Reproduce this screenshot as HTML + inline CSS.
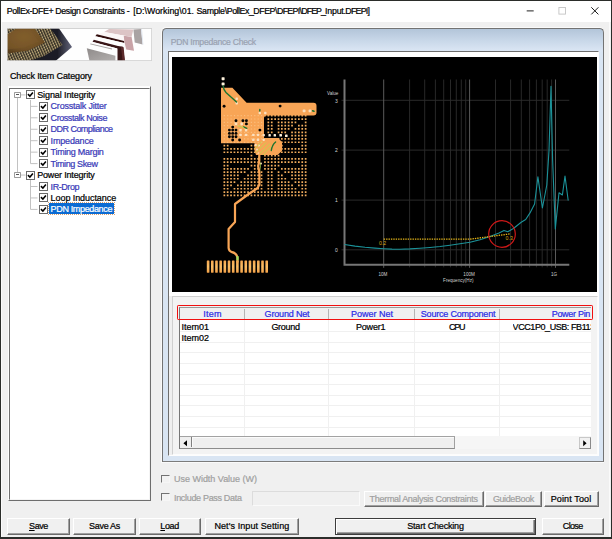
<!DOCTYPE html>
<html><head><meta charset="utf-8"><title>PollEx-DFE+ Design Constraints</title>
<style>
html,body{margin:0;padding:0}
body{width:612px;height:539px;position:relative;overflow:hidden;background:#2b2d2a;font-family:"Liberation Sans",sans-serif}
div,span,svg{position:absolute;box-sizing:border-box}
.t{-webkit-text-stroke:0.22px currentColor;white-space:pre;line-height:12px;height:12px}
.t u{text-decoration:underline;text-underline-offset:1px}
#win{left:1px;top:1px;width:609.5px;height:536px;background:#f0f0f0}
#title{left:0;top:0;width:609.5px;height:21px;background:#fff}
.btn{background:#f0f0f0;border:1px solid;border-color:#fff #6a6a6a #6a6a6a #fff;box-shadow:inset -1px -1px 0 #a0a0a0}
.btn.def{border:1px solid #3c3c3c;box-shadow:inset 1px 1px 0 #fff,inset -1px -1px 0 #6a6a6a,inset -2px -2px 0 #a0a0a0}
.sunk{border:1px solid;border-color:#a0a0a0 #fff #fff #a0a0a0;box-shadow:inset 1px 1px 0 #696969,inset -1px -1px 0 #e3e3e3;background:#fff}
.cb{width:9px;height:9px;background:#fff;border:1.2px solid #6c6c6c}
.cbd{width:8.4px;height:8px;background:#f2f2f2;border:1.3px solid;border-color:#727272 #f6f6f6 #f6f6f6 #727272}
.pm{width:6.6px;height:6.4px;border:1px solid #9c9c9c;border-radius:0.8px;background:#fff}
.pm i{position:absolute;left:0.7px;top:1.7px;width:3.2px;height:1px;background:#555}
.gl{background:#f0f0f0}

</style></head>
<body>
<div id="win">
 <div id="title"></div>
 <div style="left:608.3px;top:21px;width:1.2px;height:515px;background:#fafafa"></div>
 <div style="left:0;top:21px;width:1px;height:515px;background:#fbfbfb"></div>
</div>
<!-- title bar buttons -->
<svg style="left:520px;top:2px" width="90" height="18" viewBox="520 2 90 18">
 <path d="M526.7 10.9H533.7" stroke="#222" stroke-width="1" fill="none"/>
 <rect x="558.9" y="7.5" width="6.6" height="6.6" stroke="#c4c4c4" stroke-width="0.9" fill="none"/>
 <path d="M591.3 7.3L598.4 14.4M598.4 7.3L591.3 14.4" stroke="#1a1a1a" stroke-width="1" fill="none"/>
</svg>

<!-- photo banner -->
<svg style="left:7px;top:28px" width="145" height="33" viewBox="7 28 145 33">
 <defs>
  <radialGradient id="chipg" cx="0.45" cy="0.35" r="0.8">
   <stop offset="0" stop-color="#86622f"/><stop offset="0.6" stop-color="#705026"/><stop offset="1" stop-color="#4c3517"/>
  </radialGradient>
  <pattern id="pins" width="2.5" height="2.5" patternUnits="userSpaceOnUse" patternTransform="rotate(-24)">
   <rect width="2.5" height="2.5" fill="#2f2920"/><rect x="0.4" y="0.3" width="1.3" height="1.9" rx="0.5" fill="#d2bd88"/>
  </pattern>
  <linearGradient id="shad" x1="0" y1="0" x2="1" y2="0"><stop offset="0" stop-color="#15151c"/><stop offset="0.78" stop-color="#1e1e28"/><stop offset="1" stop-color="#62647a"/></linearGradient>
  <linearGradient id="gsh" x1="0" y1="0" x2="1" y2="1"><stop offset="0" stop-color="#8f8b8a"/><stop offset="1" stop-color="#b3afae"/></linearGradient>
  <filter id="bl" x="-5%" y="-5%" width="110%" height="110%"><feGaussianBlur stdDeviation="0.35"/></filter>
  <clipPath id="bclip"><rect x="7.6" y="28.8" width="143.6" height="31.5"/></clipPath>
 </defs>
 <rect x="7" y="28" width="144.8" height="33" fill="#c9c9c9"/>
 <rect x="7.6" y="28.8" width="143.6" height="31.5" fill="#fefefe"/>
 <g clip-path="url(#bclip)" filter="url(#bl)">
 <!-- dark body -->
 <polygon points="7,28 58.7,28 72,47 55.5,61 7,61" fill="url(#shad)"/>
 <!-- pins band -->
 <polygon points="7,28 50,28 62.5,45 44,56 29,61 7,61" fill="url(#pins)"/>
 <!-- chip face -->
 <polygon points="7,28 34,28 45,42.6 27.6,50.7 7,53.5" fill="url(#chipg)"/>
 <polygon points="7,31 30,29.5 39,41.5 25,47.5 7,49.5" fill="#7c5a2a" opacity="0.5"/>
 <polygon points="7,28 17,28 7,35" fill="url(#pins)"/>
 <!-- layers (back to front) -->
 <polygon points="133.4,29.4 141,29 142.6,44.6 134.7,42.6" fill="#a9a3a3"/>
 <polygon points="141,29 142,29 143.4,44.8 142.6,44.6" fill="#dfe6f0"/>
 <polygon points="109,29 133.4,29.4 131.5,37 104.2,32" fill="#dcc4c5"/>
 <polygon points="104.2,32 131.5,37 134,50.8 124.5,49.3 124,41.4 96.8,34.6" fill="#fbf6f6"/>
 <polygon points="123.8,35.8 131.6,37 134,50.8 126.3,49.6 124.3,41.5" fill="#c9a3a7"/>
 <polygon points="96.8,34.3 124,41.1 124.2,43.1 95.3,36.3" fill="#32100f"/>
 <polygon points="95.5,36.2 124.1,43 124.5,48 93.5,40" fill="#fdfdfd"/>
 <polygon points="93.8,39.7 118,46 123,46.8 124.7,61 117.3,61 117.3,48.5 92.5,42" fill="#391316"/>
 <polygon points="121,46.8 123.6,47.2 125,61 122.5,61" fill="#5a2a2c"/>
 <polygon points="92.5,41.8 117.3,48.4 117.3,61 113,61 113,55 88,47.5" fill="#fdfdfd"/>
 <polygon points="90.5,43.5 112,48.6 112,49.4 90,44.3" fill="#a5a1a0"/>
 <polygon points="86.8,48.2 115.4,55.7 115.4,61 89.5,61" fill="url(#gsh)"/>
 </g>
</svg>

<!-- tree panel -->
<div style="left:7.5px;top:86.2px;width:143.3px;height:415px;background:#fff;border:1px solid;border-color:#fdfdfd #6e6e6e #6e6e6e #fdfdfd"></div>
<div style="left:9px;top:87.9px;width:140.8px;height:412.3px;border:1.3px solid;border-color:#707070 #f4f4f4 #f4f4f4 #707070"></div>
<svg style="left:10px;top:89px" width="60" height="130" viewBox="10 89 60 130">
 <g stroke="#c2c2c2" stroke-width="1" fill="none">
  <path d="M17.5 98V175"/>
  <path d="M21 94.9H25.5M21 175.05H25.5"/>
  <path d="M30.5 100V163.6M30.5 180V209.4"/>
  <path d="M30.5 106.35H37.5M30.5 117.8H37.5M30.5 129.25H37.5M30.5 140.7H37.5M30.5 152.15H37.5M30.5 163.6H37.5M30.5 186.5H37.5M30.5 197.95H37.5M30.5 209.4H37.5"/>
 </g>
</svg>
<div class="pm" style="left:14.1px;top:91.50px"><i></i></div>
<div class="cb" style="left:25.8px;top:90.40px"><svg style="left:0;top:0" width="7" height="7" viewBox="0 0 7 7"><path d="M0.9 3.1L2.9 5.1L5.9 1.5" stroke="#000" stroke-width="1.5" fill="none"/></svg></div>
<div class="cb" style="left:39.1px;top:101.85px"><svg style="left:0;top:0" width="7" height="7" viewBox="0 0 7 7"><path d="M0.9 3.1L2.9 5.1L5.9 1.5" stroke="#000" stroke-width="1.5" fill="none"/></svg></div>
<div class="cb" style="left:39.1px;top:113.30px"><svg style="left:0;top:0" width="7" height="7" viewBox="0 0 7 7"><path d="M0.9 3.1L2.9 5.1L5.9 1.5" stroke="#000" stroke-width="1.5" fill="none"/></svg></div>
<div class="cb" style="left:39.1px;top:124.75px"><svg style="left:0;top:0" width="7" height="7" viewBox="0 0 7 7"><path d="M0.9 3.1L2.9 5.1L5.9 1.5" stroke="#000" stroke-width="1.5" fill="none"/></svg></div>
<div class="cb" style="left:39.1px;top:136.20px"><svg style="left:0;top:0" width="7" height="7" viewBox="0 0 7 7"><path d="M0.9 3.1L2.9 5.1L5.9 1.5" stroke="#000" stroke-width="1.5" fill="none"/></svg></div>
<div class="cb" style="left:39.1px;top:147.65px"><svg style="left:0;top:0" width="7" height="7" viewBox="0 0 7 7"><path d="M0.9 3.1L2.9 5.1L5.9 1.5" stroke="#000" stroke-width="1.5" fill="none"/></svg></div>
<div class="cb" style="left:39.1px;top:159.10px"><svg style="left:0;top:0" width="7" height="7" viewBox="0 0 7 7"><path d="M0.9 3.1L2.9 5.1L5.9 1.5" stroke="#000" stroke-width="1.5" fill="none"/></svg></div>
<div class="pm" style="left:14.1px;top:171.65px"><i></i></div>
<div class="cb" style="left:25.8px;top:170.55px"><svg style="left:0;top:0" width="7" height="7" viewBox="0 0 7 7"><path d="M0.9 3.1L2.9 5.1L5.9 1.5" stroke="#000" stroke-width="1.5" fill="none"/></svg></div>
<div class="cb" style="left:39.1px;top:182.00px"><svg style="left:0;top:0" width="7" height="7" viewBox="0 0 7 7"><path d="M0.9 3.1L2.9 5.1L5.9 1.5" stroke="#000" stroke-width="1.5" fill="none"/></svg></div>
<div class="cb" style="left:39.1px;top:193.45px"><svg style="left:0;top:0" width="7" height="7" viewBox="0 0 7 7"><path d="M0.9 3.1L2.9 5.1L5.9 1.5" stroke="#000" stroke-width="1.5" fill="none"/></svg></div>
<div class="cb" style="left:39.1px;top:204.90px"><svg style="left:0;top:0" width="7" height="7" viewBox="0 0 7 7"><path d="M0.9 3.1L2.9 5.1L5.9 1.5" stroke="#000" stroke-width="1.5" fill="none"/></svg></div>
<div style="left:48.9px;top:203.00px;width:64.8px;height:10.8px;background:#0b6bd3;outline:0.5px dotted #d8a070;outline-offset:-0.5px"></div>

<!-- PDN panel -->
<div style="left:161px;top:27px;width:443px;height:435.5px;border-radius:5px 5px 0 0;background:#fafafa"></div>
<div style="left:162px;top:28px;width:441.5px;height:434px;border-radius:4.5px 4.5px 0 0;background:linear-gradient(#b3c5d9 0,#c9d8e9 12px,#dbe6f4 22px,#d9e5f3 23px);border:1px solid #737373;border-bottom-color:#7c7c7c"></div>
<!-- inner frame -->
<div style="left:168px;top:51px;width:430.5px;height:405.2px;background:#f0f0f0;border:1px solid;border-color:#6e6e6e #fdfdfd #fdfdfd #6e6e6e"></div>
<div style="left:169px;top:52px;width:428.5px;height:244px;background:#fff"></div>
<div id="black" style="left:172px;top:56.5px;width:425px;height:235px;background:#000"></div>

<!-- table container -->
<div style="left:172px;top:295.5px;width:425.5px;height:159.8px;background:#f3f3f3;border:1px solid;border-color:#d0d0d0 #fcfcfc #fcfcfc #d0d0d0"></div>
<!-- grid -->
<div id="grid" style="left:179.2px;top:307px;width:411.5px;height:141.6px;background:#fff;border-left:1px solid #777;border-top:1px solid #9a9a9a;overflow:hidden">
 <!-- header -->
 <div style="left:0;top:0;width:412px;height:12px;background:#f0f0f0;border-bottom:1px solid #dcdcdc"></div>
 <div style="left:63.4px;top:1px;width:1px;height:10px;background:#b4b4b4"></div>
 <div style="left:148.3px;top:1px;width:1px;height:10px;background:#b4b4b4"></div>
 <div style="left:233.8px;top:1px;width:1px;height:10px;background:#b4b4b4"></div>
 <div style="left:318.9px;top:1px;width:1px;height:10px;background:#b4b4b4"></div>
 <!-- column lines -->
 <div class="gl" style="left:63.4px;top:12px;width:1px;height:116px"></div>
 <div class="gl" style="left:148.3px;top:12px;width:1px;height:116px"></div>
 <div class="gl" style="left:233.8px;top:12px;width:1px;height:116px"></div>
 <div class="gl" style="left:318.9px;top:12px;width:1px;height:116px"></div>
 <div class="gl" style="left:0;top:23.00px;width:412px;height:1px"></div>
<div class="gl" style="left:0;top:33.63px;width:412px;height:1px"></div>
<div class="gl" style="left:0;top:44.26px;width:412px;height:1px"></div>
<div class="gl" style="left:0;top:54.89px;width:412px;height:1px"></div>
<div class="gl" style="left:0;top:65.52px;width:412px;height:1px"></div>
<div class="gl" style="left:0;top:76.15px;width:412px;height:1px"></div>
<div class="gl" style="left:0;top:86.78px;width:412px;height:1px"></div>
<div class="gl" style="left:0;top:97.41px;width:412px;height:1px"></div>
<div class="gl" style="left:0;top:108.04px;width:412px;height:1px"></div>
<div class="gl" style="left:0;top:118.67px;width:412px;height:1px"></div>
 <!-- scrollbar -->
 <div style="left:0;top:128.3px;width:412px;height:12.3px;background:#f6f6f6"></div>
 <div style="left:0;top:128.3px;width:274.8px;height:12.3px;background:#efefef;border-top:1px solid #a2a2a2;border-bottom:1.2px solid #8c8c8c;border-right:1px solid #a0a0a0"></div>
 <div style="left:12px;top:129.3px;width:261.8px;height:10.1px;border-left:1px solid #fbfbfb;border-top:1px solid #fbfbfb"></div>
 <div style="left:0;top:129.3px;width:12px;height:10.1px;border-right:1px solid #808080"></div>
 <div style="left:398.6px;top:128.8px;width:12px;height:11.8px;background:#f1f1f1;border:1px solid;border-color:#c8c8c8 #8a8a8a #8a8a8a #c8c8c8"></div>
 <svg style="left:0;top:128.5px" width="412" height="13" viewBox="0 0 412 13"><path d="M7 3.2V9.2L3.4 6.2Z M403.2 3.2V9.2L406.6 6.2Z" fill="#000"/></svg>
</div>
<!-- red highlight rect -->
<div style="left:176.8px;top:305.1px;width:416.4px;height:14.9px;border:1.8px solid #f01010;border-radius:1.2px"></div>

<!-- lower controls -->
<div class="cbd" style="left:161.4px;top:474.7px"></div>
<div class="cbd" style="left:161.4px;top:493.1px"></div>
<div style="left:251.5px;top:490.5px;width:108px;height:15.5px;background:#f0f0f0;border:1px solid;border-color:#dcdcdc #fafafa #fafafa #dcdcdc"></div>
<div class="btn" style="left:364px;top:491px;width:119.5px;height:16px"></div>
<div class="btn" style="left:485.3px;top:491px;width:57px;height:16px"></div>
<div class="btn" style="left:543.6px;top:491px;width:55.5px;height:16px"></div>

<div class="btn" style="left:7.3px;top:518px;width:62.5px;height:17px"></div>
<div class="btn" style="left:73.2px;top:518px;width:62.8px;height:17px"></div>
<div class="btn" style="left:138.6px;top:518px;width:62.2px;height:17px"></div>
<div class="btn" style="left:205px;top:518px;width:93.8px;height:17px"></div>
<div class="btn def" style="left:335.3px;top:517.5px;width:200.5px;height:17.5px"></div>
<div class="btn" style="left:541.7px;top:518px;width:62px;height:17px"></div>
<svg style="left:172px;top:56.5px" width="425" height="235" viewBox="172 56.5 425 235">
<defs>
<pattern id="dTR" x="263.41" y="116.83" width="3.38" height="3.34" patternUnits="userSpaceOnUse"><rect x="0.84" y="0.82" width="1.7" height="1.7" rx="0.5" fill="#e3a258"/></pattern>
<pattern id="dTL" x="222.71" y="116.83" width="3.38" height="3.34" patternUnits="userSpaceOnUse"><rect x="0.84" y="0.82" width="1.7" height="1.7" rx="0.5" fill="#e3a258"/></pattern>
<pattern id="dBR" x="263.41" y="155.71" width="3.38" height="3.38" patternUnits="userSpaceOnUse"><rect x="0.84" y="0.84" width="1.7" height="1.7" rx="0.5" fill="#e3a258"/></pattern>
<pattern id="dBL" x="222.71" y="155.71" width="3.38" height="3.38" patternUnits="userSpaceOnUse"><rect x="0.84" y="0.84" width="1.7" height="1.7" rx="0.5" fill="#e3a258"/></pattern>
<pattern id="lTR" x="263.41" y="116.83" width="3.38" height="3.34" patternUnits="userSpaceOnUse"><rect x="0.99" y="0.97" width="1.4" height="1.4" rx="0.5" fill="#fbcf9a"/></pattern>
<pattern id="lTL" x="222.71" y="116.83" width="3.38" height="3.34" patternUnits="userSpaceOnUse"><rect x="0.99" y="0.97" width="1.4" height="1.4" rx="0.5" fill="#fbcf9a"/></pattern>
<pattern id="lBL" x="222.71" y="155.71" width="3.38" height="3.38" patternUnits="userSpaceOnUse"><rect x="0.99" y="0.99" width="1.4" height="1.4" rx="0.5" fill="#fbcf9a"/></pattern>
<pattern id="lBR" x="263.41" y="155.71" width="3.38" height="3.38" patternUnits="userSpaceOnUse"><rect x="0.99" y="0.99" width="1.4" height="1.4" rx="0.5" fill="#fbcf9a"/></pattern>
<linearGradient id="padg" x1="0" y1="0" x2="0" y2="1"><stop offset="0" stop-color="#f6a64e"/><stop offset="0.5" stop-color="#f9bd66"/><stop offset="1" stop-color="#f4a248"/></linearGradient>
<clipPath id="oc"><path d="M221 87.2H232.4L246.6 102.2H313.5Q316.5 102.2 316.5 105.2V112Q316.5 115 313.5 115H266.5Q264 115 264 117.5V137.5H278L282 141.5V150.5L277.5 154.5H256L254.5 150V142.7H221Z"/></clipPath>
</defs>
<path d="M264.1 114.4h1.7v1.7h-1.7zM267.5 114.4h1.7v1.7h-1.7zM270.9 114.4h1.7v1.7h-1.7zM274.3 114.4h1.7v1.7h-1.7zM277.7 114.4h1.7v1.7h-1.7zM281.0 114.4h1.7v1.7h-1.7zM284.4 114.4h1.7v1.7h-1.7zM287.8 114.4h1.7v1.7h-1.7zM291.2 114.4h1.7v1.7h-1.7zM294.6 114.4h1.7v1.7h-1.7zM298.0 114.4h1.7v1.7h-1.7zM301.4 114.4h1.7v1.7h-1.7zM304.8 114.4h1.7v1.7h-1.7zM223.5 117.7h1.7v1.7h-1.7zM226.8 117.7h1.7v1.7h-1.7zM230.2 117.7h1.7v1.7h-1.7zM233.6 117.7h1.7v1.7h-1.7zM237.0 117.7h1.7v1.7h-1.7zM240.4 117.7h1.7v1.7h-1.7zM243.8 117.7h1.7v1.7h-1.7zM247.2 117.7h1.7v1.7h-1.7zM250.6 117.7h1.7v1.7h-1.7zM253.9 117.7h1.7v1.7h-1.7zM257.3 117.7h1.7v1.7h-1.7zM267.5 117.7h1.7v1.7h-1.7zM270.9 117.7h1.7v1.7h-1.7zM274.3 117.7h1.7v1.7h-1.7zM277.7 117.7h1.7v1.7h-1.7zM281.0 117.7h1.7v1.7h-1.7zM284.4 117.7h1.7v1.7h-1.7zM287.8 117.7h1.7v1.7h-1.7zM291.2 117.7h1.7v1.7h-1.7zM294.6 117.7h1.7v1.7h-1.7zM298.0 117.7h1.7v1.7h-1.7zM301.4 117.7h1.7v1.7h-1.7zM304.8 117.7h1.7v1.7h-1.7zM223.5 121.0h1.7v1.7h-1.7zM226.8 121.0h1.7v1.7h-1.7zM230.2 121.0h1.7v1.7h-1.7zM233.6 121.0h1.7v1.7h-1.7zM237.0 121.0h1.7v1.7h-1.7zM240.4 121.0h1.7v1.7h-1.7zM243.8 121.0h1.7v1.7h-1.7zM247.2 121.0h1.7v1.7h-1.7zM250.6 121.0h1.7v1.7h-1.7zM253.9 121.0h1.7v1.7h-1.7zM257.3 121.0h1.7v1.7h-1.7zM267.5 121.0h1.7v1.7h-1.7zM270.9 121.0h1.7v1.7h-1.7zM277.7 121.0h1.7v1.7h-1.7zM281.0 121.0h1.7v1.7h-1.7zM284.4 121.0h1.7v1.7h-1.7zM287.8 121.0h1.7v1.7h-1.7zM291.2 121.0h1.7v1.7h-1.7zM294.6 121.0h1.7v1.7h-1.7zM304.8 121.0h1.7v1.7h-1.7zM223.5 124.3h1.7v1.7h-1.7zM226.8 124.3h1.7v1.7h-1.7zM230.2 124.3h1.7v1.7h-1.7zM233.6 124.3h1.7v1.7h-1.7zM237.0 124.3h1.7v1.7h-1.7zM240.4 124.3h1.7v1.7h-1.7zM243.8 124.3h1.7v1.7h-1.7zM247.2 124.3h1.7v1.7h-1.7zM250.6 124.3h1.7v1.7h-1.7zM253.9 124.3h1.7v1.7h-1.7zM257.3 124.3h1.7v1.7h-1.7zM267.5 124.3h1.7v1.7h-1.7zM270.9 124.3h1.7v1.7h-1.7zM277.7 124.3h1.7v1.7h-1.7zM281.0 124.3h1.7v1.7h-1.7zM284.4 124.3h1.7v1.7h-1.7zM287.8 124.3h1.7v1.7h-1.7zM291.2 124.3h1.7v1.7h-1.7zM298.0 124.3h1.7v1.7h-1.7zM301.4 124.3h1.7v1.7h-1.7zM304.8 124.3h1.7v1.7h-1.7zM223.5 127.6h1.7v1.7h-1.7zM226.8 127.6h1.7v1.7h-1.7zM230.2 127.6h1.7v1.7h-1.7zM233.6 127.6h1.7v1.7h-1.7zM237.0 127.6h1.7v1.7h-1.7zM240.4 127.6h1.7v1.7h-1.7zM243.8 127.6h1.7v1.7h-1.7zM247.2 127.6h1.7v1.7h-1.7zM250.6 127.6h1.7v1.7h-1.7zM253.9 127.6h1.7v1.7h-1.7zM257.3 127.6h1.7v1.7h-1.7zM267.5 127.6h1.7v1.7h-1.7zM270.9 127.6h1.7v1.7h-1.7zM277.7 127.6h1.7v1.7h-1.7zM281.0 127.6h1.7v1.7h-1.7zM284.4 127.6h1.7v1.7h-1.7zM287.8 127.6h1.7v1.7h-1.7zM294.6 127.6h1.7v1.7h-1.7zM298.0 127.6h1.7v1.7h-1.7zM301.4 127.6h1.7v1.7h-1.7zM304.8 127.6h1.7v1.7h-1.7zM223.5 131.0h1.7v1.7h-1.7zM226.8 131.0h1.7v1.7h-1.7zM230.2 131.0h1.7v1.7h-1.7zM233.6 131.0h1.7v1.7h-1.7zM237.0 131.0h1.7v1.7h-1.7zM240.4 131.0h1.7v1.7h-1.7zM243.8 131.0h1.7v1.7h-1.7zM247.2 131.0h1.7v1.7h-1.7zM250.6 131.0h1.7v1.7h-1.7zM253.9 131.0h1.7v1.7h-1.7zM257.3 131.0h1.7v1.7h-1.7zM267.5 131.0h1.7v1.7h-1.7zM270.9 131.0h1.7v1.7h-1.7zM277.7 131.0h1.7v1.7h-1.7zM281.0 131.0h1.7v1.7h-1.7zM284.4 131.0h1.7v1.7h-1.7zM291.2 131.0h1.7v1.7h-1.7zM294.6 131.0h1.7v1.7h-1.7zM298.0 131.0h1.7v1.7h-1.7zM301.4 131.0h1.7v1.7h-1.7zM304.8 131.0h1.7v1.7h-1.7zM223.5 134.3h1.7v1.7h-1.7zM226.8 134.3h1.7v1.7h-1.7zM230.2 134.3h1.7v1.7h-1.7zM233.6 134.3h1.7v1.7h-1.7zM237.0 134.3h1.7v1.7h-1.7zM240.4 134.3h1.7v1.7h-1.7zM243.8 134.3h1.7v1.7h-1.7zM247.2 134.3h1.7v1.7h-1.7zM250.6 134.3h1.7v1.7h-1.7zM253.9 134.3h1.7v1.7h-1.7zM257.3 134.3h1.7v1.7h-1.7zM291.2 134.3h1.7v1.7h-1.7zM294.6 134.3h1.7v1.7h-1.7zM298.0 134.3h1.7v1.7h-1.7zM301.4 134.3h1.7v1.7h-1.7zM304.8 134.3h1.7v1.7h-1.7zM223.5 137.6h1.7v1.7h-1.7zM226.8 137.6h1.7v1.7h-1.7zM230.2 137.6h1.7v1.7h-1.7zM233.6 137.6h1.7v1.7h-1.7zM237.0 137.6h1.7v1.7h-1.7zM240.4 137.6h1.7v1.7h-1.7zM243.8 137.6h1.7v1.7h-1.7zM247.2 137.6h1.7v1.7h-1.7zM250.6 137.6h1.7v1.7h-1.7zM253.9 137.6h1.7v1.7h-1.7zM257.3 137.6h1.7v1.7h-1.7zM267.5 137.6h1.7v1.7h-1.7zM270.9 137.6h1.7v1.7h-1.7zM274.3 137.6h1.7v1.7h-1.7zM277.7 137.6h1.7v1.7h-1.7zM281.0 137.6h1.7v1.7h-1.7zM284.4 137.6h1.7v1.7h-1.7zM287.8 137.6h1.7v1.7h-1.7zM291.2 137.6h1.7v1.7h-1.7zM294.6 137.6h1.7v1.7h-1.7zM298.0 137.6h1.7v1.7h-1.7zM301.4 137.6h1.7v1.7h-1.7zM304.8 137.6h1.7v1.7h-1.7zM223.5 140.9h1.7v1.7h-1.7zM226.8 140.9h1.7v1.7h-1.7zM230.2 140.9h1.7v1.7h-1.7zM233.6 140.9h1.7v1.7h-1.7zM237.0 140.9h1.7v1.7h-1.7zM240.4 140.9h1.7v1.7h-1.7zM243.8 140.9h1.7v1.7h-1.7zM247.2 140.9h1.7v1.7h-1.7zM250.6 140.9h1.7v1.7h-1.7zM253.9 140.9h1.7v1.7h-1.7zM257.3 140.9h1.7v1.7h-1.7zM267.5 140.9h1.7v1.7h-1.7zM270.9 140.9h1.7v1.7h-1.7zM274.3 140.9h1.7v1.7h-1.7zM277.7 140.9h1.7v1.7h-1.7zM281.0 140.9h1.7v1.7h-1.7zM284.4 140.9h1.7v1.7h-1.7zM287.8 140.9h1.7v1.7h-1.7zM291.2 140.9h1.7v1.7h-1.7zM294.6 140.9h1.7v1.7h-1.7zM298.0 140.9h1.7v1.7h-1.7zM301.4 140.9h1.7v1.7h-1.7zM304.8 140.9h1.7v1.7h-1.7zM223.5 144.2h1.7v1.7h-1.7zM226.8 144.2h1.7v1.7h-1.7zM250.6 144.2h1.7v1.7h-1.7zM253.9 144.2h1.7v1.7h-1.7zM257.3 144.2h1.7v1.7h-1.7zM267.5 144.2h1.7v1.7h-1.7zM270.9 144.2h1.7v1.7h-1.7zM274.3 144.2h1.7v1.7h-1.7zM277.7 144.2h1.7v1.7h-1.7zM281.0 144.2h1.7v1.7h-1.7zM301.4 144.2h1.7v1.7h-1.7zM304.8 144.2h1.7v1.7h-1.7zM223.5 147.6h1.7v1.7h-1.7zM226.8 147.6h1.7v1.7h-1.7zM230.2 147.6h1.7v1.7h-1.7zM233.6 147.6h1.7v1.7h-1.7zM237.0 147.6h1.7v1.7h-1.7zM240.4 147.6h1.7v1.7h-1.7zM243.8 147.6h1.7v1.7h-1.7zM247.2 147.6h1.7v1.7h-1.7zM250.6 147.6h1.7v1.7h-1.7zM253.9 147.6h1.7v1.7h-1.7zM257.3 147.6h1.7v1.7h-1.7zM267.5 147.6h1.7v1.7h-1.7zM270.9 147.6h1.7v1.7h-1.7zM274.3 147.6h1.7v1.7h-1.7zM277.7 147.6h1.7v1.7h-1.7zM281.0 147.6h1.7v1.7h-1.7zM284.4 147.6h1.7v1.7h-1.7zM287.8 147.6h1.7v1.7h-1.7zM291.2 147.6h1.7v1.7h-1.7zM294.6 147.6h1.7v1.7h-1.7zM298.0 147.6h1.7v1.7h-1.7zM301.4 147.6h1.7v1.7h-1.7zM304.8 147.6h1.7v1.7h-1.7zM223.5 150.9h1.7v1.7h-1.7zM226.8 150.9h1.7v1.7h-1.7zM230.2 150.9h1.7v1.7h-1.7zM233.6 150.9h1.7v1.7h-1.7zM237.0 150.9h1.7v1.7h-1.7zM240.4 150.9h1.7v1.7h-1.7zM243.8 150.9h1.7v1.7h-1.7zM247.2 150.9h1.7v1.7h-1.7zM250.6 150.9h1.7v1.7h-1.7zM253.9 150.9h1.7v1.7h-1.7zM257.3 150.9h1.7v1.7h-1.7zM267.5 150.9h1.7v1.7h-1.7zM270.9 150.9h1.7v1.7h-1.7zM274.3 150.9h1.7v1.7h-1.7zM277.7 150.9h1.7v1.7h-1.7zM281.0 150.9h1.7v1.7h-1.7zM284.4 150.9h1.7v1.7h-1.7zM287.8 150.9h1.7v1.7h-1.7zM291.2 150.9h1.7v1.7h-1.7zM294.6 150.9h1.7v1.7h-1.7zM298.0 150.9h1.7v1.7h-1.7zM301.4 150.9h1.7v1.7h-1.7zM304.8 150.9h1.7v1.7h-1.7zM250.6 154.2h1.7v1.7h-1.7zM264.1 154.2h1.7v1.7h-1.7zM267.5 154.2h1.7v1.7h-1.7zM270.9 154.2h1.7v1.7h-1.7zM274.3 154.2h1.7v1.7h-1.7zM277.7 154.2h1.7v1.7h-1.7zM223.5 157.5h1.7v1.7h-1.7zM226.8 157.5h1.7v1.7h-1.7zM230.2 157.5h1.7v1.7h-1.7zM233.6 157.5h1.7v1.7h-1.7zM237.0 157.5h1.7v1.7h-1.7zM240.4 157.5h1.7v1.7h-1.7zM243.8 157.5h1.7v1.7h-1.7zM247.2 157.5h1.7v1.7h-1.7zM250.6 157.5h1.7v1.7h-1.7zM253.9 157.5h1.7v1.7h-1.7zM257.3 157.5h1.7v1.7h-1.7zM264.1 157.5h1.7v1.7h-1.7zM267.5 157.5h1.7v1.7h-1.7zM270.9 157.5h1.7v1.7h-1.7zM274.3 157.5h1.7v1.7h-1.7zM277.7 157.5h1.7v1.7h-1.7zM281.0 157.5h1.7v1.7h-1.7zM284.4 157.5h1.7v1.7h-1.7zM287.8 157.5h1.7v1.7h-1.7zM291.2 157.5h1.7v1.7h-1.7zM294.6 157.5h1.7v1.7h-1.7zM298.0 157.5h1.7v1.7h-1.7zM301.4 157.5h1.7v1.7h-1.7zM304.8 157.5h1.7v1.7h-1.7zM223.5 160.8h1.7v1.7h-1.7zM226.8 160.8h1.7v1.7h-1.7zM230.2 160.8h1.7v1.7h-1.7zM233.6 160.8h1.7v1.7h-1.7zM237.0 160.8h1.7v1.7h-1.7zM240.4 160.8h1.7v1.7h-1.7zM243.8 160.8h1.7v1.7h-1.7zM247.2 160.8h1.7v1.7h-1.7zM250.6 160.8h1.7v1.7h-1.7zM253.9 160.8h1.7v1.7h-1.7zM257.3 160.8h1.7v1.7h-1.7zM264.1 160.8h1.7v1.7h-1.7zM267.5 160.8h1.7v1.7h-1.7zM270.9 160.8h1.7v1.7h-1.7zM274.3 160.8h1.7v1.7h-1.7zM277.7 160.8h1.7v1.7h-1.7zM281.0 160.8h1.7v1.7h-1.7zM284.4 160.8h1.7v1.7h-1.7zM287.8 160.8h1.7v1.7h-1.7zM291.2 160.8h1.7v1.7h-1.7zM294.6 160.8h1.7v1.7h-1.7zM298.0 160.8h1.7v1.7h-1.7zM301.4 160.8h1.7v1.7h-1.7zM304.8 160.8h1.7v1.7h-1.7zM223.5 164.2h1.7v1.7h-1.7zM226.8 164.2h1.7v1.7h-1.7zM250.6 164.2h1.7v1.7h-1.7zM253.9 164.2h1.7v1.7h-1.7zM257.3 164.2h1.7v1.7h-1.7zM264.1 164.2h1.7v1.7h-1.7zM267.5 164.2h1.7v1.7h-1.7zM270.9 164.2h1.7v1.7h-1.7zM274.3 164.2h1.7v1.7h-1.7zM277.7 164.2h1.7v1.7h-1.7zM301.4 164.2h1.7v1.7h-1.7zM304.8 164.2h1.7v1.7h-1.7zM223.5 167.5h1.7v1.7h-1.7zM226.8 167.5h1.7v1.7h-1.7zM230.2 167.5h1.7v1.7h-1.7zM233.6 167.5h1.7v1.7h-1.7zM237.0 167.5h1.7v1.7h-1.7zM240.4 167.5h1.7v1.7h-1.7zM243.8 167.5h1.7v1.7h-1.7zM247.2 167.5h1.7v1.7h-1.7zM253.9 167.5h1.7v1.7h-1.7zM257.3 167.5h1.7v1.7h-1.7zM264.1 167.5h1.7v1.7h-1.7zM267.5 167.5h1.7v1.7h-1.7zM270.9 167.5h1.7v1.7h-1.7zM274.3 167.5h1.7v1.7h-1.7zM281.0 167.5h1.7v1.7h-1.7zM284.4 167.5h1.7v1.7h-1.7zM287.8 167.5h1.7v1.7h-1.7zM291.2 167.5h1.7v1.7h-1.7zM294.6 167.5h1.7v1.7h-1.7zM298.0 167.5h1.7v1.7h-1.7zM301.4 167.5h1.7v1.7h-1.7zM304.8 167.5h1.7v1.7h-1.7zM223.5 170.8h1.7v1.7h-1.7zM226.8 170.8h1.7v1.7h-1.7zM230.2 170.8h1.7v1.7h-1.7zM233.6 170.8h1.7v1.7h-1.7zM237.0 170.8h1.7v1.7h-1.7zM240.4 170.8h1.7v1.7h-1.7zM243.8 170.8h1.7v1.7h-1.7zM250.6 170.8h1.7v1.7h-1.7zM253.9 170.8h1.7v1.7h-1.7zM257.3 170.8h1.7v1.7h-1.7zM260.7 170.8h1.7v1.7h-1.7zM267.5 170.8h1.7v1.7h-1.7zM270.9 170.8h1.7v1.7h-1.7zM277.7 170.8h1.7v1.7h-1.7zM284.4 170.8h1.7v1.7h-1.7zM287.8 170.8h1.7v1.7h-1.7zM291.2 170.8h1.7v1.7h-1.7zM294.6 170.8h1.7v1.7h-1.7zM298.0 170.8h1.7v1.7h-1.7zM301.4 170.8h1.7v1.7h-1.7zM304.8 170.8h1.7v1.7h-1.7zM223.5 174.1h1.7v1.7h-1.7zM226.8 174.1h1.7v1.7h-1.7zM230.2 174.1h1.7v1.7h-1.7zM233.6 174.1h1.7v1.7h-1.7zM237.0 174.1h1.7v1.7h-1.7zM247.2 174.1h1.7v1.7h-1.7zM250.6 174.1h1.7v1.7h-1.7zM253.9 174.1h1.7v1.7h-1.7zM257.3 174.1h1.7v1.7h-1.7zM260.7 174.1h1.7v1.7h-1.7zM267.5 174.1h1.7v1.7h-1.7zM270.9 174.1h1.7v1.7h-1.7zM277.7 174.1h1.7v1.7h-1.7zM281.0 174.1h1.7v1.7h-1.7zM291.2 174.1h1.7v1.7h-1.7zM294.6 174.1h1.7v1.7h-1.7zM298.0 174.1h1.7v1.7h-1.7zM301.4 174.1h1.7v1.7h-1.7zM304.8 174.1h1.7v1.7h-1.7zM223.5 177.4h1.7v1.7h-1.7zM226.8 177.4h1.7v1.7h-1.7zM230.2 177.4h1.7v1.7h-1.7zM233.6 177.4h1.7v1.7h-1.7zM237.0 177.4h1.7v1.7h-1.7zM243.8 177.4h1.7v1.7h-1.7zM247.2 177.4h1.7v1.7h-1.7zM250.6 177.4h1.7v1.7h-1.7zM253.9 177.4h1.7v1.7h-1.7zM257.3 177.4h1.7v1.7h-1.7zM260.7 177.4h1.7v1.7h-1.7zM267.5 177.4h1.7v1.7h-1.7zM270.9 177.4h1.7v1.7h-1.7zM277.7 177.4h1.7v1.7h-1.7zM281.0 177.4h1.7v1.7h-1.7zM284.4 177.4h1.7v1.7h-1.7zM291.2 177.4h1.7v1.7h-1.7zM294.6 177.4h1.7v1.7h-1.7zM298.0 177.4h1.7v1.7h-1.7zM301.4 177.4h1.7v1.7h-1.7zM304.8 177.4h1.7v1.7h-1.7zM223.5 180.8h1.7v1.7h-1.7zM226.8 180.8h1.7v1.7h-1.7zM230.2 180.8h1.7v1.7h-1.7zM233.6 180.8h1.7v1.7h-1.7zM240.4 180.8h1.7v1.7h-1.7zM243.8 180.8h1.7v1.7h-1.7zM247.2 180.8h1.7v1.7h-1.7zM250.6 180.8h1.7v1.7h-1.7zM253.9 180.8h1.7v1.7h-1.7zM257.3 180.8h1.7v1.7h-1.7zM260.7 180.8h1.7v1.7h-1.7zM267.5 180.8h1.7v1.7h-1.7zM270.9 180.8h1.7v1.7h-1.7zM277.7 180.8h1.7v1.7h-1.7zM281.0 180.8h1.7v1.7h-1.7zM284.4 180.8h1.7v1.7h-1.7zM287.8 180.8h1.7v1.7h-1.7zM294.6 180.8h1.7v1.7h-1.7zM298.0 180.8h1.7v1.7h-1.7zM301.4 180.8h1.7v1.7h-1.7zM304.8 180.8h1.7v1.7h-1.7zM223.5 184.1h1.7v1.7h-1.7zM226.8 184.1h1.7v1.7h-1.7zM230.2 184.1h1.7v1.7h-1.7zM237.0 184.1h1.7v1.7h-1.7zM240.4 184.1h1.7v1.7h-1.7zM243.8 184.1h1.7v1.7h-1.7zM247.2 184.1h1.7v1.7h-1.7zM250.6 184.1h1.7v1.7h-1.7zM253.9 184.1h1.7v1.7h-1.7zM257.3 184.1h1.7v1.7h-1.7zM260.7 184.1h1.7v1.7h-1.7zM267.5 184.1h1.7v1.7h-1.7zM270.9 184.1h1.7v1.7h-1.7zM277.7 184.1h1.7v1.7h-1.7zM281.0 184.1h1.7v1.7h-1.7zM284.4 184.1h1.7v1.7h-1.7zM287.8 184.1h1.7v1.7h-1.7zM291.2 184.1h1.7v1.7h-1.7zM298.0 184.1h1.7v1.7h-1.7zM301.4 184.1h1.7v1.7h-1.7zM304.8 184.1h1.7v1.7h-1.7zM223.5 187.4h1.7v1.7h-1.7zM226.8 187.4h1.7v1.7h-1.7zM233.6 187.4h1.7v1.7h-1.7zM237.0 187.4h1.7v1.7h-1.7zM240.4 187.4h1.7v1.7h-1.7zM243.8 187.4h1.7v1.7h-1.7zM247.2 187.4h1.7v1.7h-1.7zM250.6 187.4h1.7v1.7h-1.7zM253.9 187.4h1.7v1.7h-1.7zM257.3 187.4h1.7v1.7h-1.7zM260.7 187.4h1.7v1.7h-1.7zM267.5 187.4h1.7v1.7h-1.7zM270.9 187.4h1.7v1.7h-1.7zM277.7 187.4h1.7v1.7h-1.7zM281.0 187.4h1.7v1.7h-1.7zM284.4 187.4h1.7v1.7h-1.7zM287.8 187.4h1.7v1.7h-1.7zM291.2 187.4h1.7v1.7h-1.7zM294.6 187.4h1.7v1.7h-1.7zM301.4 187.4h1.7v1.7h-1.7zM304.8 187.4h1.7v1.7h-1.7zM223.5 190.7h1.7v1.7h-1.7zM226.8 190.7h1.7v1.7h-1.7zM230.2 190.7h1.7v1.7h-1.7zM233.6 190.7h1.7v1.7h-1.7zM237.0 190.7h1.7v1.7h-1.7zM240.4 190.7h1.7v1.7h-1.7zM243.8 190.7h1.7v1.7h-1.7zM247.2 190.7h1.7v1.7h-1.7zM250.6 190.7h1.7v1.7h-1.7zM253.9 190.7h1.7v1.7h-1.7zM257.3 190.7h1.7v1.7h-1.7zM260.7 190.7h1.7v1.7h-1.7zM264.1 190.7h1.7v1.7h-1.7zM267.5 190.7h1.7v1.7h-1.7zM270.9 190.7h1.7v1.7h-1.7zM274.3 190.7h1.7v1.7h-1.7zM277.7 190.7h1.7v1.7h-1.7zM281.0 190.7h1.7v1.7h-1.7zM284.4 190.7h1.7v1.7h-1.7zM287.8 190.7h1.7v1.7h-1.7zM291.2 190.7h1.7v1.7h-1.7zM294.6 190.7h1.7v1.7h-1.7zM298.0 190.7h1.7v1.7h-1.7zM301.4 190.7h1.7v1.7h-1.7zM304.8 190.7h1.7v1.7h-1.7zM223.5 194.0h1.7v1.7h-1.7zM226.8 194.0h1.7v1.7h-1.7zM230.2 194.0h1.7v1.7h-1.7zM233.6 194.0h1.7v1.7h-1.7zM237.0 194.0h1.7v1.7h-1.7zM240.4 194.0h1.7v1.7h-1.7zM243.8 194.0h1.7v1.7h-1.7zM247.2 194.0h1.7v1.7h-1.7zM250.6 194.0h1.7v1.7h-1.7zM253.9 194.0h1.7v1.7h-1.7zM257.3 194.0h1.7v1.7h-1.7zM260.7 194.0h1.7v1.7h-1.7zM264.1 194.0h1.7v1.7h-1.7zM267.5 194.0h1.7v1.7h-1.7zM270.9 194.0h1.7v1.7h-1.7zM274.3 194.0h1.7v1.7h-1.7zM277.7 194.0h1.7v1.7h-1.7zM281.0 194.0h1.7v1.7h-1.7zM284.4 194.0h1.7v1.7h-1.7zM287.8 194.0h1.7v1.7h-1.7zM291.2 194.0h1.7v1.7h-1.7zM294.6 194.0h1.7v1.7h-1.7zM298.0 194.0h1.7v1.7h-1.7zM301.4 194.0h1.7v1.7h-1.7zM304.8 194.0h1.7v1.7h-1.7z" fill="#f2ad5e"/>
<path d="M221 87.2H232.4L246.6 102.2H313.5Q316.5 102.2 316.5 105.2V112Q316.5 115 313.5 115H266.5Q264 115 264 117.5V137.5H278L282 141.5V150.5L277.5 154.5H256L254.5 150V142.7H221Z" fill="#f8a556"/>
<path d="M223.7 114.6h1.2v1.2h-1.2zM227.1 114.6h1.2v1.2h-1.2zM230.5 114.6h1.2v1.2h-1.2zM233.9 114.6h1.2v1.2h-1.2zM237.3 114.6h1.2v1.2h-1.2zM240.6 114.6h1.2v1.2h-1.2zM244.0 114.6h1.2v1.2h-1.2zM247.4 114.6h1.2v1.2h-1.2zM250.8 114.6h1.2v1.2h-1.2zM254.2 114.6h1.2v1.2h-1.2zM257.6 114.6h1.2v1.2h-1.2zM261.0 114.6h1.2v1.2h-1.2zM223.7 117.9h1.2v1.2h-1.2zM227.1 117.9h1.2v1.2h-1.2zM230.5 117.9h1.2v1.2h-1.2zM233.9 117.9h1.2v1.2h-1.2zM237.3 117.9h1.2v1.2h-1.2zM240.6 117.9h1.2v1.2h-1.2zM244.0 117.9h1.2v1.2h-1.2zM247.4 117.9h1.2v1.2h-1.2zM250.8 117.9h1.2v1.2h-1.2zM254.2 117.9h1.2v1.2h-1.2zM257.6 117.9h1.2v1.2h-1.2zM261.0 117.9h1.2v1.2h-1.2zM223.7 121.2h1.2v1.2h-1.2zM227.1 121.2h1.2v1.2h-1.2zM230.5 121.2h1.2v1.2h-1.2zM233.9 121.2h1.2v1.2h-1.2zM237.3 121.2h1.2v1.2h-1.2zM240.6 121.2h1.2v1.2h-1.2zM244.0 121.2h1.2v1.2h-1.2zM247.4 121.2h1.2v1.2h-1.2zM250.8 121.2h1.2v1.2h-1.2zM254.2 121.2h1.2v1.2h-1.2zM257.6 121.2h1.2v1.2h-1.2zM261.0 121.2h1.2v1.2h-1.2zM223.7 124.6h1.2v1.2h-1.2zM227.1 124.6h1.2v1.2h-1.2zM230.5 124.6h1.2v1.2h-1.2zM233.9 124.6h1.2v1.2h-1.2zM237.3 124.6h1.2v1.2h-1.2zM240.6 124.6h1.2v1.2h-1.2zM244.0 124.6h1.2v1.2h-1.2zM247.4 124.6h1.2v1.2h-1.2zM250.8 124.6h1.2v1.2h-1.2zM254.2 124.6h1.2v1.2h-1.2zM257.6 124.6h1.2v1.2h-1.2zM261.0 124.6h1.2v1.2h-1.2zM223.7 127.9h1.2v1.2h-1.2zM227.1 127.9h1.2v1.2h-1.2zM230.5 127.9h1.2v1.2h-1.2zM233.9 127.9h1.2v1.2h-1.2zM237.3 127.9h1.2v1.2h-1.2zM240.6 127.9h1.2v1.2h-1.2zM244.0 127.9h1.2v1.2h-1.2zM247.4 127.9h1.2v1.2h-1.2zM250.8 127.9h1.2v1.2h-1.2zM254.2 127.9h1.2v1.2h-1.2zM257.6 127.9h1.2v1.2h-1.2zM261.0 127.9h1.2v1.2h-1.2zM223.7 131.2h1.2v1.2h-1.2zM227.1 131.2h1.2v1.2h-1.2zM230.5 131.2h1.2v1.2h-1.2zM233.9 131.2h1.2v1.2h-1.2zM237.3 131.2h1.2v1.2h-1.2zM240.6 131.2h1.2v1.2h-1.2zM244.0 131.2h1.2v1.2h-1.2zM247.4 131.2h1.2v1.2h-1.2zM250.8 131.2h1.2v1.2h-1.2zM254.2 131.2h1.2v1.2h-1.2zM257.6 131.2h1.2v1.2h-1.2zM261.0 131.2h1.2v1.2h-1.2zM223.7 134.5h1.2v1.2h-1.2zM227.1 134.5h1.2v1.2h-1.2zM230.5 134.5h1.2v1.2h-1.2zM233.9 134.5h1.2v1.2h-1.2zM237.3 134.5h1.2v1.2h-1.2zM240.6 134.5h1.2v1.2h-1.2zM244.0 134.5h1.2v1.2h-1.2zM247.4 134.5h1.2v1.2h-1.2zM250.8 134.5h1.2v1.2h-1.2zM254.2 134.5h1.2v1.2h-1.2zM257.6 134.5h1.2v1.2h-1.2zM261.0 134.5h1.2v1.2h-1.2zM223.7 137.8h1.2v1.2h-1.2zM227.1 137.8h1.2v1.2h-1.2zM230.5 137.8h1.2v1.2h-1.2zM233.9 137.8h1.2v1.2h-1.2zM237.3 137.8h1.2v1.2h-1.2zM240.6 137.8h1.2v1.2h-1.2zM244.0 137.8h1.2v1.2h-1.2zM247.4 137.8h1.2v1.2h-1.2zM250.8 137.8h1.2v1.2h-1.2zM254.2 137.8h1.2v1.2h-1.2zM257.6 137.8h1.2v1.2h-1.2zM261.0 137.8h1.2v1.2h-1.2zM223.7 141.2h1.2v1.2h-1.2zM227.1 141.2h1.2v1.2h-1.2zM230.5 141.2h1.2v1.2h-1.2zM233.9 141.2h1.2v1.2h-1.2zM237.3 141.2h1.2v1.2h-1.2zM240.6 141.2h1.2v1.2h-1.2zM244.0 141.2h1.2v1.2h-1.2zM247.4 141.2h1.2v1.2h-1.2zM250.8 141.2h1.2v1.2h-1.2zM254.2 141.2h1.2v1.2h-1.2zM257.6 141.2h1.2v1.2h-1.2zM261.0 141.2h1.2v1.2h-1.2z" fill="#fbbd7c" clip-path="url(#oc)"/>
<circle cx="224.1" cy="105.7" r="1.45" fill="#050505"/>
<circle cx="280.1" cy="105.6" r="1.45" fill="#050505"/>
<circle cx="236" cy="120.2" r="1.45" fill="#050505"/>
<circle cx="242.9" cy="120.2" r="1.45" fill="#050505"/>
<circle cx="246.4" cy="120.2" r="1.45" fill="#050505"/>
<circle cx="246.4" cy="123.4" r="1.45" fill="#050505"/>
<circle cx="232.7" cy="126.6" r="1.45" fill="#050505"/>
<circle cx="229.4" cy="129.6" r="1.45" fill="#050505"/>
<circle cx="232.7" cy="129.6" r="1.45" fill="#050505"/>
<circle cx="236" cy="129.6" r="1.45" fill="#050505"/>
<circle cx="229.4" cy="132.9" r="1.45" fill="#050505"/>
<circle cx="232.7" cy="132.9" r="1.45" fill="#050505"/>
<circle cx="236" cy="132.9" r="1.45" fill="#050505"/>
<circle cx="229.4" cy="136.2" r="1.45" fill="#050505"/>
<circle cx="232.7" cy="136.2" r="1.45" fill="#050505"/>
<circle cx="236" cy="136.2" r="1.45" fill="#050505"/>
<circle cx="232.7" cy="139.5" r="1.45" fill="#050505"/>
<circle cx="239.6" cy="139.5" r="1.45" fill="#050505"/>
<circle cx="259.9" cy="129.6" r="1.45" fill="#050505"/>
<rect x="221.60" y="76.70" width="3.00" height="3.00" rx="0.6" fill="#fdf1dc"/>
<rect x="221.60" y="81.90" width="3.00" height="3.00" rx="0.6" fill="#fdf1dc"/>
<rect x="235.50" y="97.00" width="2.40" height="2.40" rx="0.6" fill="#fbe0bf"/>
<rect x="235.50" y="101.50" width="2.40" height="2.40" rx="0.6" fill="#fbe0bf"/>
<rect x="258.60" y="111.30" width="2.40" height="2.40" rx="0.6" fill="#fbe0bf"/>
<rect x="264.10" y="111.30" width="2.40" height="2.40" rx="0.6" fill="#fbe0bf"/>
<rect x="302.70" y="108.90" width="2.80" height="2.80" rx="0.6" fill="#fbe0bf"/>
<rect x="308.60" y="108.90" width="2.80" height="2.80" rx="0.6" fill="#fbe0bf"/>
<rect x="234.70" y="122.10" width="2.60" height="2.60" rx="0.6" fill="#fbe0bf"/>
<rect x="240.40" y="122.10" width="2.60" height="2.60" rx="0.6" fill="#fbe0bf"/>
<rect x="239.30" y="128.50" width="2.40" height="2.40" rx="0.6" fill="#fbe0bf"/>
<rect x="244.90" y="128.50" width="2.40" height="2.40" rx="0.6" fill="#fbe0bf"/>
<rect x="239.30" y="133.20" width="2.40" height="2.40" rx="0.6" fill="#fbe0bf"/>
<rect x="244.90" y="133.20" width="2.40" height="2.40" rx="0.6" fill="#fbe0bf"/>
<rect x="252.10" y="133.20" width="2.40" height="2.40" rx="0.6" fill="#fbe0bf"/>
<rect x="256.80" y="133.20" width="2.40" height="2.40" rx="0.6" fill="#fbe0bf"/>
<rect x="262.50" y="133.40" width="2.40" height="2.40" rx="0.6" fill="#fbe0bf"/>
<rect x="252.10" y="138.10" width="2.40" height="2.40" rx="0.6" fill="#fbe0bf"/>
<rect x="256.80" y="138.10" width="2.40" height="2.40" rx="0.6" fill="#fbe0bf"/>
<rect x="262.60" y="138.20" width="2.20" height="2.20" rx="0.6" fill="#fbe0bf"/>
<rect x="254.70" y="143.50" width="2.00" height="2.00" rx="0.6" fill="#fbe0bf"/>
<rect x="257.90" y="143.90" width="2.00" height="2.00" rx="0.6" fill="#fbe0bf"/>
<rect x="268.40" y="133.60" width="2.40" height="2.40" rx="0.6" fill="#fdf1dc"/>
<rect x="273.60" y="133.60" width="2.40" height="2.40" rx="0.6" fill="#fdf1dc"/>
<rect x="279.40" y="133.50" width="2.60" height="2.60" rx="0.6" fill="#fdf1dc"/>
<rect x="285.00" y="134.00" width="2.60" height="2.60" rx="0.6" fill="#fdf1dc"/>
<rect x="256.10" y="148.10" width="1.80" height="1.80" rx="0.6" fill="#fbe0bf"/>
<rect x="257.60" y="152.10" width="1.80" height="1.80" rx="0.6" fill="#fbe0bf"/>
<rect x="258.10" y="158.10" width="1.80" height="1.80" rx="0.6" fill="#fbe0bf"/>
<rect x="260.10" y="162.10" width="1.80" height="1.80" rx="0.6" fill="#fbe0bf"/>
<g stroke="#1c7430" stroke-width="1.4" fill="none" stroke-linecap="round">
<path d="M223.2 85.5Q223.5 89.5 226 92L236.5 101.5"/>
<path d="M259.8 109V110.6" stroke-width="1.4"/><path d="M243.7 126.3L246.9 127.8" stroke-width="1.3"/>
<path d="M275.6 141.5Q272 144.5 271.3 150"/>
<path d="M312.6 110.3L314 110.8" stroke-width="1.6"/>
</g>
<g stroke="#b5dc4a" stroke-width="0.8" fill="none">
<path d="M237.7 125.4L244 127"/>
<path d="M256 152L266 142 M259 154L270 143 M262.5 154.5L271 146 M255 148L262 141"/>
<path d="M258.5 156L260.5 165L259.5 172"/>
</g>
<path d="M259.3 153V160L258.2 166L259.4 172V184L257.6 187.5L248 194L235 203.5V221.5L228.6 228.5V247.5Q228.8 250.5 232 251.7Q236.3 252.5 237.5 257V262" stroke="#f8a556" stroke-width="2.2" fill="none" stroke-linejoin="round"/>
<path d="M237.5 255.6V260" stroke="#9fe060" stroke-width="2.2" fill="none"/>
<rect x="206.80" y="260" width="2.6" height="12.2" rx="0.4" fill="url(#padg)"/>
<rect x="210.99" y="260" width="2.6" height="12.2" rx="0.4" fill="url(#padg)"/>
<rect x="215.17" y="260" width="2.6" height="12.2" rx="0.4" fill="url(#padg)"/>
<rect x="219.36" y="260" width="2.6" height="12.2" rx="0.4" fill="url(#padg)"/>
<rect x="223.54" y="260" width="2.6" height="12.2" rx="0.4" fill="url(#padg)"/>
<rect x="227.73" y="260" width="2.6" height="12.2" rx="0.4" fill="url(#padg)"/>
<rect x="231.92" y="260" width="2.6" height="12.2" rx="0.4" fill="url(#padg)"/>
<rect x="236.10" y="260" width="2.6" height="12.2" rx="0.4" fill="url(#padg)"/>
<rect x="240.29" y="260" width="2.6" height="12.2" rx="0.4" fill="url(#padg)"/>
<rect x="244.47" y="260" width="2.6" height="12.2" rx="0.4" fill="url(#padg)"/>
<rect x="248.66" y="260" width="2.6" height="12.2" rx="0.4" fill="url(#padg)"/>
<rect x="252.85" y="260" width="2.6" height="12.2" rx="0.4" fill="url(#padg)"/>
<rect x="257.03" y="260" width="2.6" height="12.2" rx="0.4" fill="url(#padg)"/>
<rect x="261.22" y="260" width="2.6" height="12.2" rx="0.4" fill="url(#padg)"/>
<rect x="265.40" y="260" width="2.6" height="12.2" rx="0.4" fill="url(#padg)"/>
<g stroke="#2f2f2f" stroke-width="0.9">
<path d="M341.5 99.8H569.3"/>
<path d="M341.5 149.6H569.3"/>
<path d="M341.5 199.6H569.3"/>
<path d="M341.5 249.3H569.3"/>
</g>
<g stroke="#2d2d2d" stroke-width="0.9">
<path d="M409.6 79V266.8"/>
<path d="M424.7 79V266.8"/>
<path d="M435.4 79V266.8"/>
<path d="M443.7 79V266.8"/>
<path d="M450.5 79V266.8"/>
<path d="M456.3 79V266.8"/>
<path d="M461.3 79V266.8"/>
<path d="M465.7 79V266.8"/>
<path d="M495.5 79V266.8"/>
<path d="M510.6 79V266.8"/>
<path d="M521.3 79V266.8"/>
<path d="M529.6 79V266.8"/>
<path d="M536.4 79V266.8"/>
<path d="M542.2 79V266.8"/>
<path d="M547.2 79V266.8"/>
<path d="M551.6 79V266.8"/>
</g>
<g stroke="#5a5a5a" stroke-width="1">
<path d="M383.7 79V267.3"/>
<path d="M469.6 79V267.3"/>
<path d="M555.5 79V267.3"/>
</g>
<path d="M344.5 79V264.3H569.3" stroke="#767676" stroke-width="2" fill="none"/>
<g font-family="'Liberation Sans',sans-serif" fill="#d0d0d0" font-size="4.6">
<text x="327" y="94.2">Value</text>
<text x="337.9" y="102.1" text-anchor="end" font-size="5">3</text>
<text x="337.9" y="151.9" text-anchor="end" font-size="5">2</text>
<text x="337.9" y="201.9" text-anchor="end" font-size="5">1</text>
<text x="337.9" y="251.6" text-anchor="end" font-size="5">0</text>
<text x="382.9" y="275" text-anchor="middle">10M</text>
<text x="469.1" y="275" text-anchor="middle">100M</text>
<text x="554.0" y="275" text-anchor="middle">1G</text>
<text x="458.3" y="281.3" text-anchor="middle">Frequency(Hz)</text>
</g>
<polyline points="344.5,244 355,245.6 365,246.8 375,247.6 383.7,248.2 392,248.6 400,248.7 410,248.4 420,247.8 430,247 440,246 450,244.7 460,243.3 470,241.7 480,239.3 490,236 499,232.4 504,229.9 507.8,231.2 513.4,228 521.2,221.7 525.7,219 530,212.4 534.6,203.5 537.9,176.3 542.4,207.5 546.8,184.5 549,150 551,85.7 552.6,159 555.3,228.4 559,192.3 562.4,194.5 565,175.6 568.2,200" stroke="#1b9299" stroke-width="1.1" fill="none" stroke-linejoin="round"/>
<path d="M383.7 238.7H470L510 233.4" stroke="#e8b818" stroke-width="1.3" stroke-dasharray="1.4 1" fill="none"/>
<g font-family="'Liberation Sans',sans-serif" fill="#d9a514" font-size="5.2"><text x="379" y="244.8">0.2</text><text x="505.6" y="239.9">0.3</text></g>
<circle cx="502" cy="233.5" r="13.3" stroke="#d01818" stroke-width="1.2" fill="none"/>
</svg>
<div id="ttl" style="left:0;top:0"><span class="t" style="left:6.80px;top:4.90px;font-size:8.8px;letter-spacing:-0.387px;color:#000">PollEx-DFE+ </span><span class="t" style="left:55.20px;top:4.90px;font-size:8.8px;letter-spacing:-0.318px;color:#000">Design </span><span class="t" style="left:82.80px;top:4.90px;font-size:8.8px;letter-spacing:-0.245px;color:#000">Constraints </span><span class="t" style="left:126.80px;top:4.90px;font-size:8.8px;letter-spacing:0.512px;color:#000">- </span><span class="t" style="left:133.20px;top:4.90px;font-size:8.8px;letter-spacing:0.025px;color:#000">[D:\Working\01. </span><span class="t" style="left:196.50px;top:4.90px;font-size:8.8px;letter-spacing:-0.283px;color:#000">Sample\</span><span class="t" style="left:226.80px;top:4.90px;font-size:8.8px;letter-spacing:-0.475px;color:#000">PollEx_</span><span class="t" style="left:253.30px;top:4.90px;font-size:8.8px;letter-spacing:-0.441px;color:#000">DFEP\</span><span class="t" style="left:277.00px;top:4.90px;font-size:8.8px;letter-spacing:-0.677px;color:#000">DFEPI\</span><span class="t" style="left:301.30px;top:4.90px;font-size:8.8px;letter-spacing:-0.932px;color:#000">DFEP_</span><span class="t" style="left:325.00px;top:4.90px;font-size:8.8px;letter-spacing:-0.196px;color:#000">Input</span><span class="t" style="left:343.60px;top:4.90px;font-size:8.8px;letter-spacing:-0.728px;color:#000">.DFEPI]</span></div>
<span class="t" style="left:10.00px;top:70.00px;font-size:9px;letter-spacing:-0.134px;color:#000">Check Item Category</span>
<span class="t" style="left:170.80px;top:36.10px;font-size:8.6px;letter-spacing:-0.253px;color:#9aa2b1">PDN Impedance Check</span>
<span class="t" style="left:37.20px;top:88.90px;font-size:9px;letter-spacing:-0.097px;color:#000">Signal Integrity</span>
<span class="t" style="left:50.60px;top:100.35px;font-size:9px;letter-spacing:-0.220px;color:#3a3ab8">Crosstalk Jitter</span>
<span class="t" style="left:50.60px;top:111.80px;font-size:9px;letter-spacing:-0.442px;color:#3a3ab8">Crosstalk Noise</span>
<span class="t" style="left:50.60px;top:123.25px;font-size:9px;letter-spacing:-0.538px;color:#3a3ab8">DDR Compliance</span>
<span class="t" style="left:50.60px;top:134.70px;font-size:9px;letter-spacing:-0.170px;color:#3a3ab8">Impedance</span>
<span class="t" style="left:50.60px;top:146.15px;font-size:9px;letter-spacing:-0.284px;color:#3a3ab8">Timing Margin</span>
<span class="t" style="left:50.60px;top:157.60px;font-size:9px;letter-spacing:-0.381px;color:#3a3ab8">Timing Skew</span>
<span class="t" style="left:37.20px;top:169.05px;font-size:9px;letter-spacing:-0.169px;color:#000">Power Integrity</span>
<span class="t" style="left:50.60px;top:180.50px;font-size:9px;letter-spacing:-0.431px;color:#3a3ab8">IR-Drop</span>
<span class="t" style="left:50.60px;top:191.95px;font-size:9px;letter-spacing:-0.071px;color:#000">Loop Inductance</span>
<span class="t" style="left:50.60px;top:203.40px;font-size:9px;letter-spacing:-0.350px;color:#fff">PDN Impedance</span>
<span class="t" style="left:29.00px;top:520.00px;font-size:9px;letter-spacing:-0.379px;color:#000"><u>S</u>ave</span>
<span class="t" style="left:89.00px;top:520.00px;font-size:9px;letter-spacing:-0.290px;color:#000">Save As</span>
<span class="t" style="left:160.35px;top:520.00px;font-size:9px;letter-spacing:-0.383px;color:#000"><u>L</u>oad</span>
<span class="t" style="left:214.40px;top:520.00px;font-size:9px;letter-spacing:0.091px;color:#000">Net's Input Setting</span>
<span class="t" style="left:407.20px;top:520.00px;font-size:9px;letter-spacing:-0.174px;color:#000">Start Checking</span>
<span class="t" style="left:562.85px;top:520.00px;font-size:9px;letter-spacing:-0.663px;color:#000">Close</span>
<span class="t" style="left:369.60px;top:492.70px;font-size:9px;letter-spacing:-0.305px;color:#a0a0a0">Thermal Analysis Constraints</span>
<span class="t" style="left:492.90px;top:492.70px;font-size:9px;letter-spacing:-0.392px;color:#a0a0a0">GuideBook</span>
<span class="t" style="left:550.75px;top:492.70px;font-size:9px;letter-spacing:0.113px;color:#000">Point Tool</span>
<span class="t" style="left:174.00px;top:473.00px;font-size:9px;letter-spacing:-0.019px;color:#a0a0a0">Use Width Value (W)</span>
<span class="t" style="left:174.00px;top:491.60px;font-size:9px;letter-spacing:-0.320px;color:#a0a0a0">Include Pass Data</span>
<span class="t" style="left:203.25px;top:307.60px;font-size:9px;letter-spacing:0.246px;color:#2a2ae6">Item</span>
<span class="t" style="left:264.60px;top:307.60px;font-size:9px;letter-spacing:-0.173px;color:#2a2ae6">Ground Net</span>
<span class="t" style="left:351.00px;top:307.60px;font-size:9px;letter-spacing:-0.003px;color:#2a2ae6">Power Net</span>
<span class="t" style="left:420.75px;top:307.60px;font-size:9px;letter-spacing:-0.190px;color:#2a2ae6">Source Component</span>
<span class="t" style="left:181.50px;top:320.80px;font-size:9px;letter-spacing:-0.003px;color:#000">Item01</span>
<span class="t" style="left:181.50px;top:331.60px;font-size:9px;letter-spacing:-0.003px;color:#000">Item02</span>
<span class="t" style="left:271.40px;top:320.80px;font-size:9px;letter-spacing:-0.305px;color:#000">Ground</span>
<span class="t" style="left:355.95px;top:320.80px;font-size:9px;letter-spacing:-0.169px;color:#000">Power1</span>
<span class="t" style="left:448.95px;top:320.80px;font-size:9px;letter-spacing:-1.239px;color:#000">CPU</span>
<span class="t" style="left:551.70px;top:307.60px;font-size:9px;letter-spacing:-0.292px;color:#2a2ae6;width:38.90px;overflow:hidden">Power Pin</span>
<span class="t" style="left:512.60px;top:320.80px;font-size:9px;letter-spacing:-0.427px;color:#000;width:78.00px;overflow:hidden">VCC1P0_USB: FB113, CPU</span>
</body></html>
